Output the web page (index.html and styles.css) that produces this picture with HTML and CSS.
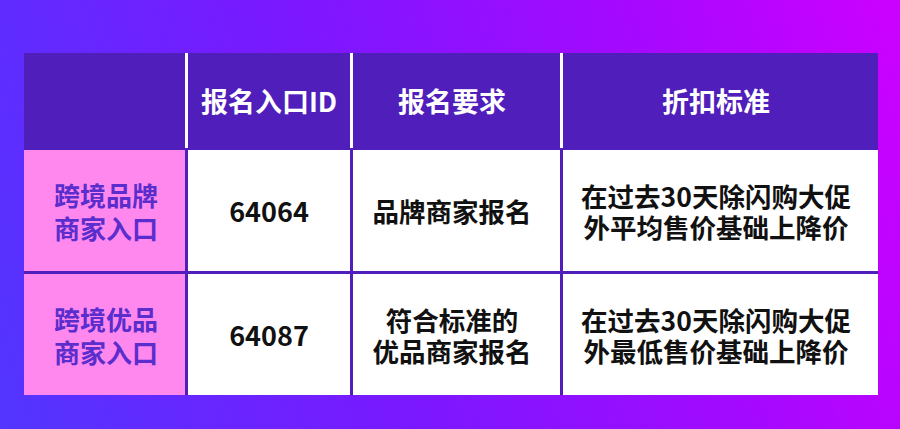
FILE: index.html
```html
<!DOCTYPE html>
<html lang="zh">
<head>
<meta charset="utf-8">
<link rel="stylesheet" href="styles.css">
</head>
<body>
<div class="page">
  <div class="table">
    <div class="head">
      <div class="hc"></div>
      <div class="hc">报名入口ID</div>
      <div class="hc shift">报名要求</div>
      <div class="hc shift">折扣标准</div>
    </div>
    <div class="body">
      <div class="cell label">跨境品牌<br>商家入口</div>
      <div class="cell num">64064</div>
      <div class="cell shift">品牌商家报名</div>
      <div class="cell shift">在过去30天除闪购大促<br>外平均售价基础上降价</div>
      <div class="cell label">跨境优品<br>商家入口</div>
      <div class="cell num">64087</div>
      <div class="cell shift">符合标准的<br>优品商家报名</div>
      <div class="cell shift">在过去30天除闪购大促<br>外最低售价基础上降价</div>
    </div>
  </div>
</div>
</body>
</html>
```
FILE: styles.css
```css
* { box-sizing: border-box; }
html, body { margin: 0; padding: 0; }
body {
  width: 900px;
  height: 429px;
  overflow: hidden;
  font-family: "Noto Sans CJK SC", "Noto Sans", sans-serif;
}
.page {
  width: 900px;
  height: 429px;
  padding: 53px 22px 0 24px;
  background: linear-gradient(72deg, #5236ff 0%, #7a18ff 40%, #a808ff 75%, #cc00ff 100%);
}
.table {
  width: 854px;
  background: #4f1ebb;
}
.head {
  display: grid;
  grid-template-columns: 161px 162px 207px 315px;
  column-gap: 3px;
  height: 95px;
  background: #ffffff;
}
.hc {
  background: #4f1ebb;
  color: #ffffff;
  font-weight: 700;
  font-size: 27px;
  display: flex;
  align-items: center;
  justify-content: center;
}
.body {
  display: grid;
  grid-template-columns: 161px 162px 207px 315px;
  grid-template-rows: 121px 121px;
  column-gap: 3px;
  row-gap: 3px;
  padding-top: 2px;
}
.cell {
  background: #ffffff;
  color: #111111;
  font-weight: 700;
  font-size: 26.5px;
  line-height: 31px;
  display: flex;
  align-items: center;
  justify-content: center;
  text-align: center;
}
.shift {
  padding-right: 9px;
}
.label {
  background: #ff88ee;
  color: #5a2dcc;
  font-size: 26px;
  line-height: 33px;
  padding-left: 3px;
}
.num {
  font-size: 27px;
}
```
